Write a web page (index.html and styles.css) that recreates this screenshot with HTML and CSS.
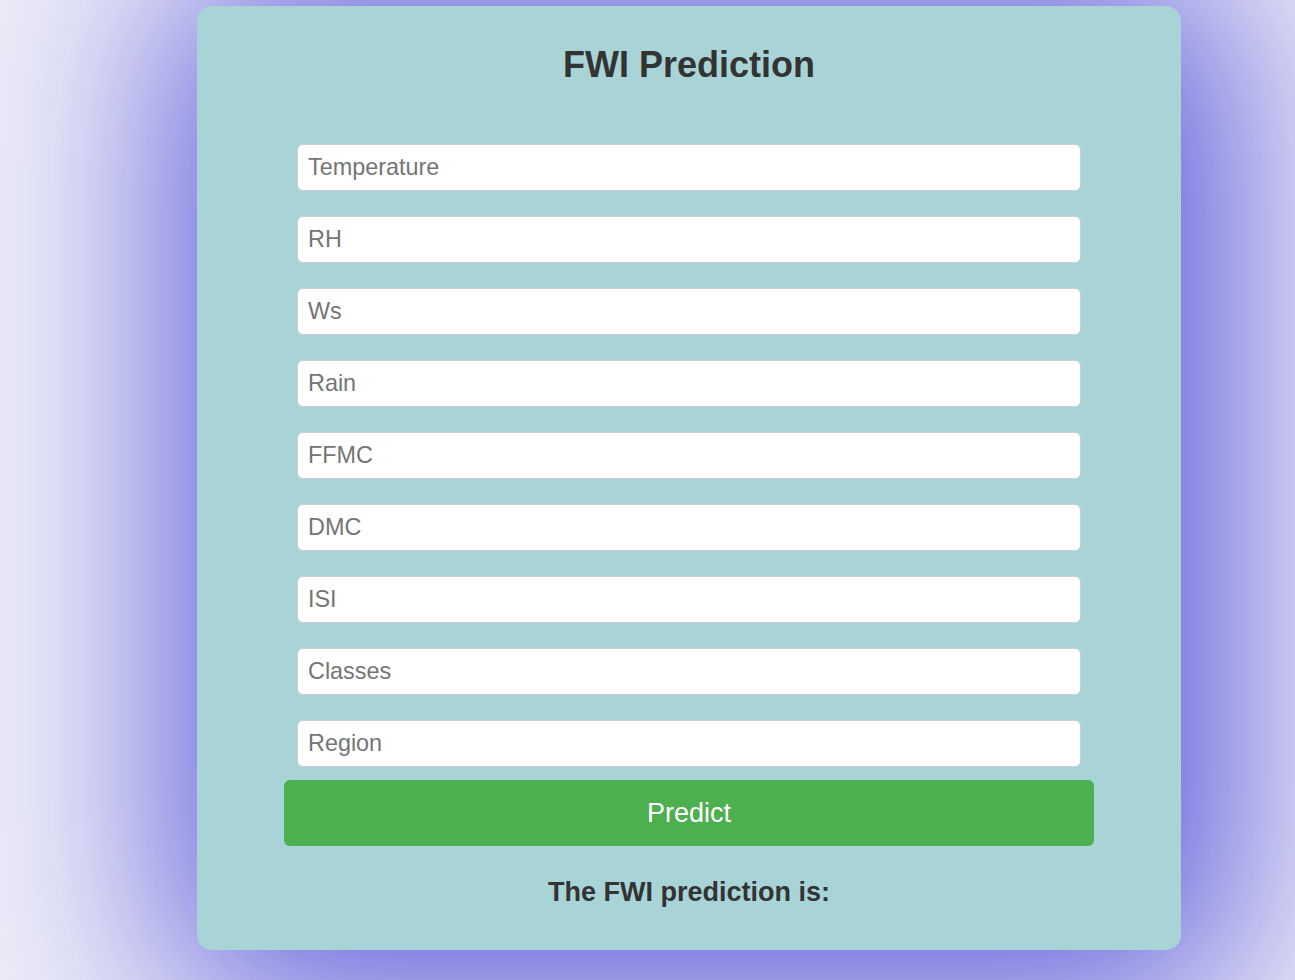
FILE: index.html
```html
<!DOCTYPE html>
<html lang="en">
<head>
<meta charset="utf-8">
<title>FWI Prediction</title>
<link rel="stylesheet" href="styles.css">
</head>
<body>
<div class="card">
  <h1 class="title">FWI Prediction</h1>
  <form class="form">
    <input class="field" type="text" placeholder="Temperature">
    <input class="field" type="text" placeholder="RH">
    <input class="field" type="text" placeholder="Ws">
    <input class="field" type="text" placeholder="Rain">
    <input class="field" type="text" placeholder="FFMC">
    <input class="field" type="text" placeholder="DMC">
    <input class="field" type="text" placeholder="ISI">
    <input class="field" type="text" placeholder="Classes">
    <input class="field last" type="text" placeholder="Region">
    <button class="btn" type="button">Predict</button>
  </form>
  <h3 class="result">The FWI prediction is:</h3>
</div>
</body>
</html>
```

FILE: styles.css
```css
html, body {
  margin: 0;
  padding: 0;
  height: 100%;
}
body {
  background: #ededf8;
  font-family: "Liberation Sans", Arial, sans-serif;
  overflow: hidden;
}
.card {
  box-sizing: border-box;
  width: 984px;
  height: 944px;
  margin: 6px 0 0 197px;
  padding-top: 14px;
  background: #a8d4d8;
  border-radius: 15px;
  box-shadow: 14px 12px 200px 40px #5c5cdb;
  display: flex;
  flex-direction: column;
  align-items: center;
}
.title {
  margin: 24px 0 0;
  font-size: 36px;
  font-weight: bold;
  color: #333;
  line-height: 41px;
}
.form {
  margin-top: 59px;
  display: flex;
  flex-direction: column;
  align-items: center;
  width: 810px;
}
.field {
  box-sizing: border-box;
  width: 784px;
  height: 47px;
  margin: 0 0 25px;
  padding: 0 10px;
  border: 1px solid #cfcfcf;
  border-radius: 6px;
  background: #fff;
  font-family: "Liberation Sans", Arial, sans-serif;
  font-size: 23.4px;
  color: #333;
  outline: none;
}
.field::placeholder {
  color: #757575;
}
.field.last {
  margin-bottom: 13px;
}
.btn {
  box-sizing: border-box;
  width: 810px;
  height: 66px;
  border: none;
  border-radius: 6px;
  background: #4caf50;
  color: #fff;
  font-family: "Liberation Sans", Arial, sans-serif;
  font-size: 27px;
  cursor: pointer;
}
.result {
  margin: 31px 0 0;
  font-size: 27px;
  font-weight: bold;
  color: #333;
  line-height: 31px;
}
```
